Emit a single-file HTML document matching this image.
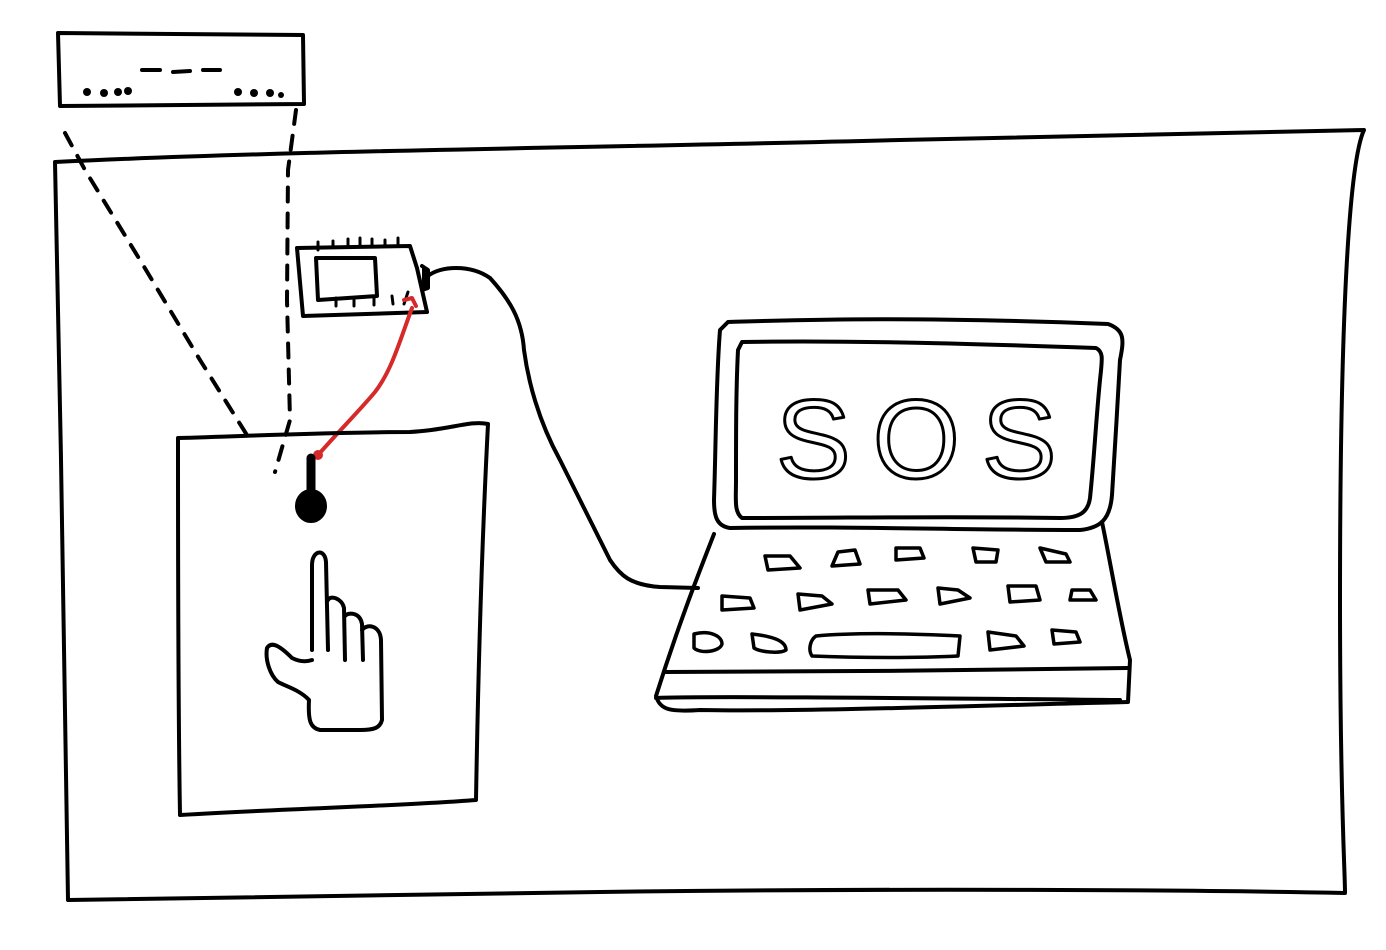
<!DOCTYPE html>
<html><head><meta charset="utf-8"><style>html,body{margin:0;padding:0;background:#fff;width:1386px;height:950px;overflow:hidden}</style></head>
<body>
<svg width="1386" height="950" viewBox="0 0 1386 950" xmlns="http://www.w3.org/2000/svg" fill="none" stroke="#000" stroke-width="4" stroke-linecap="round" stroke-linejoin="round">
<!-- top small box -->
<path d="M58 33 L303 35 L304 104 L60 106 Z"/>
<path d="M142 70 L160 70 M173 72 L190 71 M203 70 L220 70"/>
<g fill="#000" stroke="none"><circle cx="87" cy="92" r="4"/><circle cx="104" cy="93" r="4"/><circle cx="118" cy="92" r="4"/><circle cx="128" cy="91" r="4"/><circle cx="238" cy="92" r="4"/><circle cx="254" cy="93" r="4"/><circle cx="270" cy="93" r="4"/><circle cx="281" cy="95" r="3"/></g>
<!-- big frame -->
<path d="M55 162 C300 150 600 148 900 140 C1100 136 1250 132 1364 130 C1350 160 1340 300 1340 600 C1340 800 1345 870 1345 893 C1200 890 900 888 600 892 C400 895 200 898 68 900 C66 700 60 400 55 162 Z"/>
<!-- dashed lines -->
<path d="M65 133 L85 170 L140 260 L200 360 L250 440" stroke-dasharray="14 12"/>
<path d="M296 110 L288 170 L287 300 L290 420 L275 472" stroke-dasharray="14 12"/>
<!-- board -->
<path d="M297 248 L410 246 L417 268 L427 312 L303 316 Z"/>
<path d="M316 258 L375 258 L377 296 L318 300 Z"/>
<path d="M318 242 L318 250 M333 241 L333 247 M348 239 L348 246 M360 238 L360 245 M372 239 L372 246 M385 240 L385 246 M398 238 L398 246 M336 298 L336 306 M354 298 L354 306 M374 297 L374 305 M392 296 L393 304 M408 292 L404 304" stroke-width="3"/>
<path d="M422 266 L428 270 L428 288 L422 290" fill="#000"/>
<!-- cable -->
<path d="M428 276 C440 266 470 264 490 278 C510 300 522 320 524 350 C528 380 538 420 560 460 C580 500 600 540 610 560 C620 575 630 585 660 587 L698 588"/>
<!-- red cable -->
<path d="M318 455 C340 430 360 410 375 392 C392 370 400 340 412 308" stroke="#d62a2a" stroke-width="4"/>
<path d="M404 300 L412 298 L416 306" stroke="#d62a2a" stroke-width="4"/>
<circle cx="318" cy="455" r="5" fill="#d62a2a" stroke="none"/>
<!-- inner box -->
<path d="M178 438 C250 436 330 432 410 432 C450 430 470 420 488 424 C482 540 478 680 476 800 C400 806 300 808 180 815 C178 700 178 560 178 438 Z"/>
<!-- probe -->
<path d="M311 458 L311 492" stroke-width="9"/>
<ellipse cx="311" cy="506" rx="14" ry="15" fill="#000"/>
<!-- hand -->
<path d="M312 650 L312 565 C312 550 325 548 326 562 L328 650 M328 600 C330 595 342 598 344 608 L345 660 M345 616 C348 612 360 612 362 624 L363 660 M362 630 C366 624 380 624 381 640 L382 720 C380 728 374 730 360 730 L320 730 C310 728 308 720 309 700 C300 690 285 686 278 682 C270 675 265 660 267 648 C272 640 282 648 292 658 C300 662 306 662 312 660"/>
<!-- laptop screen -->
<path d="M728 322 C800 320 900 316 1108 324 C1125 330 1124 340 1120 360 C1118 400 1114 460 1112 495 C1110 520 1100 528 1080 530 C950 530 850 526 730 528 C716 526 714 515 714 500 C716 440 716 380 720 330 Z"/>
<path d="M742 342 C850 340 980 344 1096 348 C1104 352 1102 360 1100 380 C1096 420 1094 460 1090 498 C1088 512 1080 518 1060 518 C950 516 850 518 742 518 C734 512 736 500 736 480 C736 430 736 390 738 350 Z"/>
<!-- keyboard base -->
<path d="M714 534 C700 570 680 620 656 696 C660 710 670 712 700 710 C800 712 1000 705 1128 702 L1130 660 C1120 620 1110 560 1102 522"/>
<path d="M665 672 C800 672 1000 670 1128 668"/>
<path d="M656 698 C700 696 900 698 1120 700"/>
<g stroke-width="3.5">
<path d="M765 556 L790 556 L800 568 L768 570 Z"/>
<path d="M838 552 L855 550 L860 564 L832 566 Z"/>
<path d="M896 548 L920 548 L924 558 L896 560 Z"/>
<path d="M973 548 L998 550 L996 562 L976 562 Z"/>
<path d="M1040 548 L1066 554 L1070 562 L1046 562 Z"/>
<path d="M722 596 L750 598 L754 608 L722 610 Z"/>
<path d="M798 594 L822 596 L832 604 L800 610 Z"/>
<path d="M868 590 L898 590 L906 600 L870 604 Z"/>
<path d="M938 588 L958 590 L970 598 L940 604 Z"/>
<path d="M1008 586 L1036 586 L1040 600 L1010 602 Z"/>
<path d="M1072 590 L1090 590 L1096 600 L1070 600 Z"/>
<path d="M694 634 C710 630 722 636 722 644 C720 652 700 654 694 648 Z"/>
<path d="M752 634 C770 636 786 640 786 650 C780 654 760 652 754 648 Z"/>
<path d="M816 636 C860 632 920 634 960 636 L958 656 C920 658 860 658 812 656 C808 650 810 640 816 636 Z"/>
<path d="M988 632 L1016 636 L1024 646 L990 650 Z"/>
<path d="M1052 630 L1076 632 L1080 642 L1054 644 Z"/>
</g>
<!-- SOS -->
<text x="776" y="478" font-family="Liberation Sans, sans-serif" font-size="112" font-weight="normal" fill="none" stroke="#000" stroke-width="3" letter-spacing="22">SOS</text>
</svg>
</body></html>
